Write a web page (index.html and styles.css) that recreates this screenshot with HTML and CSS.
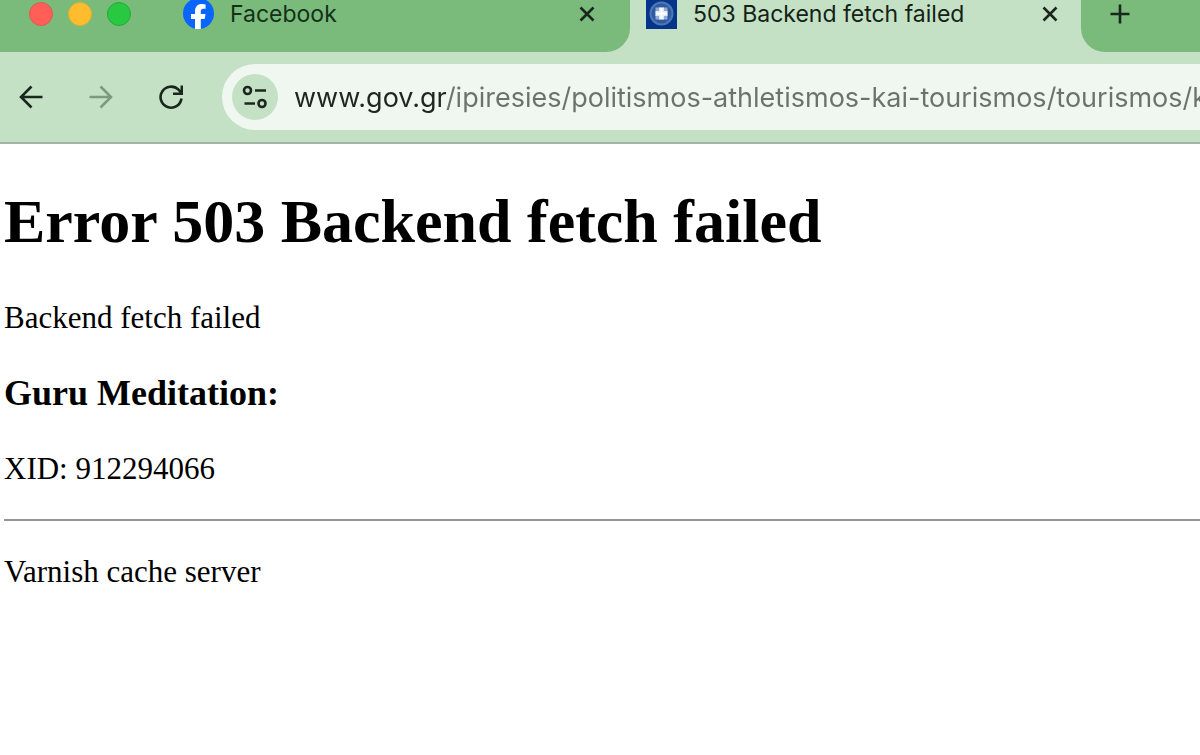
FILE: index.html
```
<!DOCTYPE html>
<html lang="en">

<head>
    <meta charset="utf-8">
    <meta name="viewport" content="width=device-width, initial-scale=1">
    <title>503 Backend fetch failed</title>
    <link rel="stylesheet" href="styles.css">
</head>

<body>

    <header>
        <div class="tabstrip">
            <div class="strip strip-left">
                <div class="lights">
                    <button class="light red" aria-label="Close window"></button>
                    <button class="light yellow" aria-label="Minimize window"></button>
                    <button class="light green" aria-label="Zoom window"></button>
                </div>
                <div class="tab">
                    <svg class="favicon" viewBox="0 0 31 31">
                        <circle cx="15.500" cy="15.500" r="15.500" fill="#0866ff" />
                        <path d="M12 31V21H8V16H12V13.500C12 8.500 14.500 6 19 6C20.500 6 21.800 6.200 22.600 6.500V10.800H20.400C18.500 10.800 17.800 11.700 17.800 13.500V16H22.500L21.700 21H17.800V31Z" fill="#fff" />
                    </svg>
                    <span class="tab-title">Facebook</span>
                    <button class="icon-button" aria-label="Close tab">
                        <svg width="16" height="16" viewBox="0 0 16 16"><path d="M1.500 1.500L14.500 14.500M14.500 1.500L1.500 14.500" /></svg>
                    </button>
                </div>
            </div>
            <div class="tab active">
                <svg class="favicon" viewBox="0 0 31 31">
                    <rect width="31" height="31" fill="#05358a" />
                    <circle cx="15.500" cy="15.500" r="11" fill="#2f5ba3" stroke="#4f77b4" stroke-width="2" />
                    <rect x="9.500" y="9.500" width="12" height="12" fill="#8fabd6" />
                    <path d="M13 9.500H18V13H21.500V18H18V21.500H13V18H9.500V13H13Z" fill="#dfe8f5" />
                    <path d="M14.500 10H16.500V14.500H21V16.500H16.500V21H14.500V16.500H10V14.500H14.500Z" fill="#fff" />
                </svg>
                <span class="tab-title">503 Backend fetch failed</span>
                <button class="icon-button" aria-label="Close tab">
                    <svg width="16" height="16" viewBox="0 0 16 16"><path d="M1.500 1.500L14.500 14.500M14.500 1.500L1.500 14.500" /></svg>
                </button>
            </div>
            <div class="strip strip-right">
                <button class="icon-button" aria-label="New tab">
                    <svg width="20" height="20" viewBox="0 0 20 20"><path d="M10 0.500V19.500M0.500 10H19.500" /></svg>
                </button>
            </div>
        </div>

        <nav class="toolbar">
            <button class="icon-button" aria-label="Back">
                <svg width="24" height="24" viewBox="0 0 24 24"><path d="M23.500 12H2M12.500 1.500L2 12L12.500 22.500" /></svg>
            </button>
            <button class="icon-button" aria-label="Forward" disabled>
                <svg width="24" height="24" viewBox="0 0 24 24"><path d="M0.500 12H22M11.500 1.500L22 12L11.500 22.500" /></svg>
            </button>
            <button class="icon-button" aria-label="Reload">
                <svg width="24" height="24" viewBox="0 0 24 24"><path d="M22.500 13.500A10.500 10.500 0 1 1 19.500 4.700L22 7.500M22.800 0.500V8.800H14" /></svg>
            </button>
            <div class="omnibox">
                <button class="site-info" aria-label="View site information">
                    <svg width="26" height="24" viewBox="0 0 26 24"><circle cx="5.500" cy="5.500" r="3.500" /><path d="M13 5.500H24M2.500 18.500H13" /><circle cx="20" cy="18.500" r="3.500" /></svg>
                </button>
                <input class="address" type="text" aria-label="Address" spellcheck="false" value="www.gov.gr/ipiresies/politismos-athletismos-kai-tourismos/tourismos/k">
            </div>
        </nav>
    </header>

    <main>
        <h1>Error 503 Backend fetch failed</h1>
        <p>Backend fetch failed</p>
        <h3>Guru Meditation:</h3>
        <p>XID: 912294066</p>
        <hr>
        <p>Varnish cache server</p>
    </main>

</body>

</html>
```

FILE: styles.css
```
body {
    margin: 0;
    background: #fff;
    color: #000;
    overflow-x: hidden;
}

header {
    font-family: Inter, "Liberation Sans", sans-serif;
    background: #c4e1c5;
    color: #14301a;
    border-bottom: 2px solid #a3b5a5;
}

button {
    border: 0;
    padding: 0;
    background: none;
}

.tabstrip {
    display: flex;
    height: 52px;
}

.strip {
    display: flex;
    box-sizing: border-box;
    background: #7abb7c;
}

.strip-left {
    padding-right: 12px;
    border-bottom-right-radius: 24px;
}

.strip-right {
    flex: 1;
    padding: 0 24px 25px;
    align-items: center;
    border-bottom-left-radius: 24px;
}

.lights {
    display: flex;
    align-items: center;
    gap: 15px;
    padding: 0 36px 24px 29px;
}

.light {
    width: 24px;
    height: 24px;
    border-radius: 50%;
}

.red {
    background: #ff5f57;
    border: 1px solid #e2594f;
}

.yellow {
    background: #febc2e;
    border: 1px solid #e0b02f;
}

.green {
    background: #28c840;
    border: 1px solid #22ab38;
}

.tab {
    display: flex;
    align-items: center;
    box-sizing: border-box;
    width: 451px;
    padding: 0 16px 25px;
}

.favicon {
    flex: none;
    width: 31px;
    height: 31px;
    margin-right: 16px;
}

.tab-title {
    flex: 1;
    font-size: 23px;
    line-height: 28px;
    white-space: nowrap;
}

.active {
    color: #142216;
}

.icon-button {
    display: flex;
    align-items: center;
    justify-content: center;
    flex: none;
    width: 30px;
    height: 30px;
    color: #1b271c;
}

.icon-button:disabled {
    color: #7f9881;
}

.icon-button svg,
.site-info svg {
    fill: none;
    stroke: currentColor;
    stroke-width: 2.6;
}

.toolbar {
    display: flex;
    align-items: center;
    gap: 40px;
    padding: 12px 0 12px 16px;
}

.omnibox {
    flex: 1;
    display: flex;
    align-items: center;
    gap: 16px;
    min-width: 0;
    height: 66px;
    padding-left: 10px;
    margin-left: -4px;
    border-radius: 33px 0 0 33px;
    background: #f0f7f1;
}

.site-info {
    display: flex;
    align-items: center;
    justify-content: center;
    flex: none;
    width: 46px;
    height: 46px;
    border-radius: 50%;
    background: #c4e1c5;
    color: #1b271c;
}

/* host name is dark, the path after it is grey */
.address {
    flex: 1;
    min-width: 0;
    height: 40px;
    padding: 0;
    border: 0;
    outline: 0;
    font-family: inherit;
    font-size: 27px;
    color: transparent;
    caret-color: #1b271c;
    background: linear-gradient(to right, #1f2620 153px, #6a736b 153px);
    -webkit-background-clip: text;
    background-clip: text;
}

main {
    padding-left: 4px;
    font-family: "Liberation Serif", "Times New Roman", serif;
    font-size: 31px;
    line-height: 35px;
}

h1 {
    margin: 42px 0 44px;
    font-size: 62px;
    line-height: 70px;
}

h3 {
    margin: 37px 0;
    font-size: 36px;
    line-height: 42px;
}

p {
    margin: 33px 0;
}

hr {
    margin: 32px 0;
    border: 0;
    border-top: 2px solid #949494;
}
```
